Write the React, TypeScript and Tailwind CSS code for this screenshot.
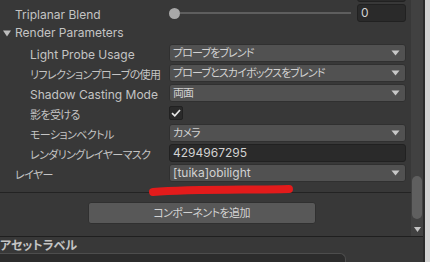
import React from "react";

const FONT = "font-['Inter','Noto_Sans_CJK_JP',sans-serif]";
const JP = "[font-feature-settings:'palt'] text-[11px] tracking-[-0.6px]";
const JP_FIELD = "[font-feature-settings:'palt'] text-[11px] tracking-[-0.9px]";

function Arrow() {
  return (
    <svg width="9" height="6" viewBox="0 0 9 6" className="shrink-0">
      <path d="M0.5 0.5 H8.5 L4.5 5.5 Z" fill="#c8c8c8" />
    </svg>
  );
}

function Dropdown({ value, jp = true }: { value: string; jp?: boolean }) {
  return (
    <div className="flex h-[18px] flex-1 items-center justify-between rounded-[3px] border border-[#303030] bg-[#515151] pl-[3px] pr-[5px] text-[12px] text-[#d2d2d2]">
      <span className={jp ? `whitespace-nowrap leading-none ${JP_FIELD}` : "whitespace-nowrap leading-none"}>{value}</span>
      <Arrow />
    </div>
  );
}

function Row({
  label,
  jp = false,
  indent = 30,
  children,
}: {
  label: string;
  jp?: boolean;
  indent?: number;
  children: React.ReactNode;
}) {
  return (
    <div className="flex h-[20px] items-center pr-[5px]">
      <div className={indent === 30 ? "w-[169px] shrink-0 pl-[30px]" : "w-[169px] shrink-0 pl-[15px]"}>
        <span
          className={
            jp
              ? `whitespace-nowrap leading-none text-[#c4c4c4] ${JP}`
              : "whitespace-nowrap text-[12px] leading-none text-[#c4c4c4]"
          }
        >
          {label}
        </span>
      </div>
      {children}
    </div>
  );
}

export default function App() {
  return (
    <div className={`relative flex h-[262px] w-[430px] overflow-hidden bg-[#383838] ${FONT}`}>
      <div className="flex w-[423px] flex-col">
        <div className="flex h-[236px]">
          {/* inspector body */}
          <div className="flex w-[411px] flex-col">
            <div className="-mt-[17px] flex h-[20px] items-center justify-end pr-[5px]">
              <div className="h-[18px] w-[49px] rounded-[3px] border border-[#212121] bg-[#2a2a2a]" />
            </div>
            <div className="flex h-[20px] items-center pr-[5px]">
              <div className="w-[169px] shrink-0 pl-[15px]">
                <span className="text-[12px] leading-none text-[#c4c4c4]">Triplanar Blend</span>
              </div>
              <div className="flex flex-1 items-center">
                <div className="h-[11px] w-[11px] shrink-0 rounded-full bg-[#a8a8a8]" />
                <div className="h-[2px] flex-1 bg-[#5e5e5e]" />
                <div className="ml-[6px] flex h-[18px] w-[49px] items-center rounded-[3px] border border-[#212121] bg-[#2a2a2a] pl-[3px] text-[12px] text-[#d2d2d2]">
                  0
                </div>
              </div>
            </div>
            <div className="flex h-[20px] items-center gap-[4px] pl-[3px]">
              <svg width="8" height="7" viewBox="0 0 8 7">
                <path d="M0 0.5 H8 L4 6.5 Z" fill="#bdbdbd" />
              </svg>
              <span className="text-[12px] leading-none text-[#c4c4c4]">Render Parameters</span>
            </div>
            <Row label="Light Probe Usage">
              <Dropdown value="プローブをブレンド" />
            </Row>
            <Row label="リフレクションプローブの使用" jp>
              <Dropdown value="プローブとスカイボックスをブレンド" />
            </Row>
            <Row label="Shadow Casting Mode">
              <Dropdown value="両面" />
            </Row>
            <Row label="影を受ける" jp>
              <div className="flex h-[14px] w-[14px] items-center justify-center rounded-[2px] border border-[#212121] bg-[#2a2a2a]">
                <svg width="10" height="8" viewBox="0 0 10 8">
                  <path d="M1 4.2 L3.8 6.8 L9 1" fill="none" stroke="#e6e6e6" strokeWidth="1.7" />
                </svg>
              </div>
            </Row>
            <Row label="モーションベクトル" jp>
              <Dropdown value="カメラ" />
            </Row>
            <Row label="レンダリングレイヤーマスク" jp>
              <div className="flex h-[18px] flex-1 items-center rounded-[3px] border border-[#212121] bg-[#2a2a2a] pl-[3px] text-[12px] text-[#d2d2d2]">
                4294967295
              </div>
            </Row>
            <Row label="レイヤー" jp indent={15}>
              <Dropdown value="[tuika]obilight" jp={false} />
            </Row>
            <div className="mt-[9px] h-px bg-[#232323]" />
            <div className="flex justify-center pt-[9px]">
              <div className="ml-[-8px] flex h-[22px] w-[228px] items-center justify-center rounded-[3px] border border-[#303030] bg-[#585858] text-[#d2d2d2]">
                <span className={`whitespace-nowrap leading-none ${JP}`}>コンポーネントを追加</span>
              </div>
            </div>
          </div>
          {/* scrollbar */}
          <div className="flex w-[12px] flex-col items-center bg-[#414141]">
            <div className="mt-[176px] h-[43px] w-[10px] rounded-[5px] bg-[#5f5f5f]" />
            <svg width="7" height="5" viewBox="0 0 7 5" className="mt-[8px]">
              <path d="M0 0 H7 L3.5 5 Z" fill="#c4c4c4" />
            </svg>
          </div>
        </div>
        <div className="h-px bg-[#1f1f1f]" />
        <div className="flex h-[16px] items-end">
          <span className="whitespace-nowrap text-[12px] font-bold leading-[14px] text-[#c4c4c4] [font-feature-settings:'palt']">
            アセットラベル
          </span>
        </div>
        <div className="flex flex-1">
          <div className="w-[346px] rounded-tr-[6px] border-r border-t border-[#4d4d4d] bg-[#2c2c2c]" />
        </div>
      </div>
      <div className="w-[2px] bg-[#2b2b2b]" />
      <div className="flex-1 bg-[#d4d4d4]" />

      {/* red annotation stroke */}
      <svg className="pointer-events-none absolute left-0 top-0" width="430" height="262">
        <path
          d="M153 192 C 190 189, 250 190, 289 189"
          fill="none"
          stroke="#e31b1b"
          strokeWidth="8"
          strokeLinecap="round"
        />
      </svg>
    </div>
  );
}
